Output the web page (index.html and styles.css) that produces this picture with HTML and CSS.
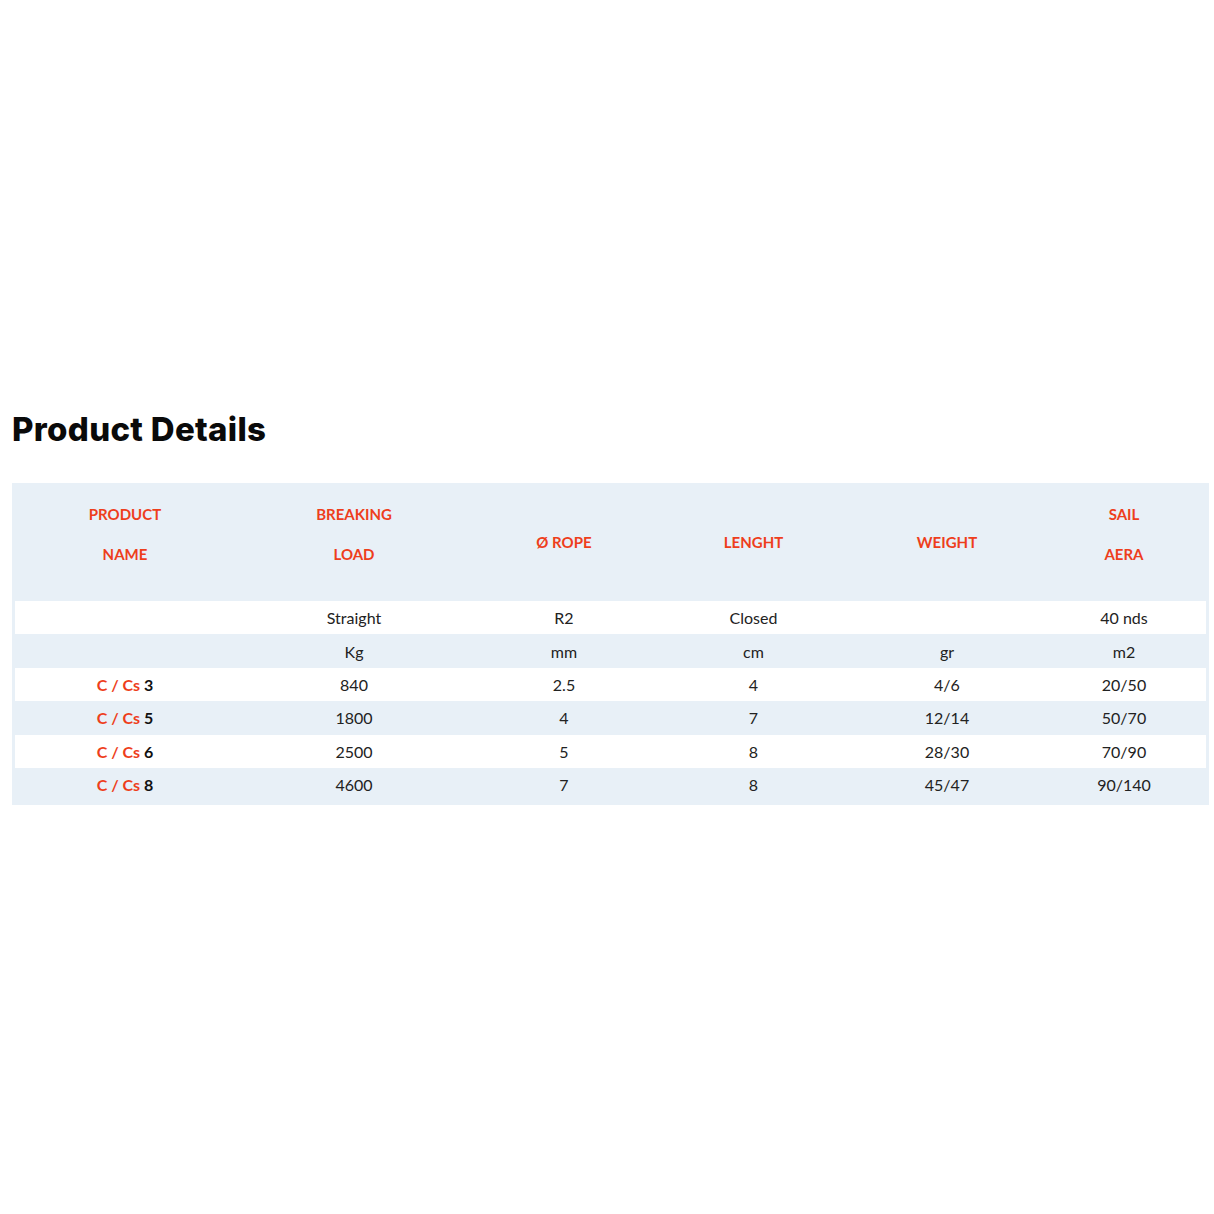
FILE: index.html
```html
<!DOCTYPE html>
<html>
<head>
<meta charset="utf-8">
<link rel="stylesheet" href="styles.css">
</head>
<body>
<main class="page">
  <h2 class="title">Product Details</h2>
  <div class="table-wrap">
    <table class="specs">
      <colgroup>
        <col class="c1"><col class="c2"><col class="c3"><col class="c4"><col class="c5"><col class="c6">
      </colgroup>
      <thead>
        <tr class="head">
          <th><div class="two">PRODUCT<br>NAME</div></th>
          <th><div class="two">BREAKING<br>LOAD</div></th>
          <th>Ø ROPE</th>
          <th>LENGHT</th>
          <th>WEIGHT</th>
          <th><div class="two">SAIL<br>AERA</div></th>
        </tr>
      </thead>
      <tbody>
        <tr class="odd"><td></td><td>Straight</td><td>R2</td><td>Closed</td><td></td><td>40 nds</td></tr>
        <tr class="even"><td></td><td>Kg</td><td>mm</td><td>cm</td><td>gr</td><td>m2</td></tr>
        <tr class="odd"><td class="name"><span class="red">C / Cs</span> 3</td><td>840</td><td>2.5</td><td>4</td><td>4/6</td><td>20/50</td></tr>
        <tr class="even"><td class="name"><span class="red">C / Cs</span> 5</td><td>1800</td><td>4</td><td>7</td><td>12/14</td><td>50/70</td></tr>
        <tr class="odd"><td class="name"><span class="red">C / Cs</span> 6</td><td>2500</td><td>5</td><td>8</td><td>28/30</td><td>70/90</td></tr>
        <tr class="even"><td class="name"><span class="red">C / Cs</span> 8</td><td>4600</td><td>7</td><td>8</td><td>45/47</td><td>90/140</td></tr>
      </tbody>
    </table>
  </div>
</main>
</body>
</html>
```
FILE: styles.css
```css
html, body {
  margin: 0;
  padding: 0;
  background: #ffffff;
}
.page {
  padding: 405px 5px 0 12px;
}
.title {
  margin: 0 0 30px 0;
  font-family: Inter, "Liberation Sans", sans-serif;
  font-weight: 800;
  font-size: 33px;
  line-height: 48px;
  color: #0a0a0a;
  letter-spacing: 0.3px;
}
.table-wrap {
  background: #e8f0f7;
  padding: 0 3px 4px 3px;
}
.specs {
  width: 100%;
  border-collapse: collapse;
  table-layout: fixed;
  font-family: Lato, "Liberation Sans", sans-serif;
  font-size: 16px;
  color: #222222;
}
.c1 { width: 220px; }
.c2 { width: 238px; }
.c3 { width: 182px; }
.c4 { width: 197px; }
.c5 { width: 190px; }
.c6 { width: auto; }
.head th {
  height: 118px;
  padding: 0;
  text-align: center;
  vertical-align: middle;
  color: #ee3e1c;
  font-weight: 700;
  font-size: 15px;
}
.two {
  line-height: 40px;
  padding-bottom: 16px;
}
.specs td {
  height: 33.4px;
  padding: 0;
  text-align: center;
  vertical-align: middle;
}
.odd { background: #ffffff; }
.even { background: #e8f0f7; }
.name {
  font-weight: 700;
  color: #111111;
}
.red {
  color: #ee3e1c;
}
```
